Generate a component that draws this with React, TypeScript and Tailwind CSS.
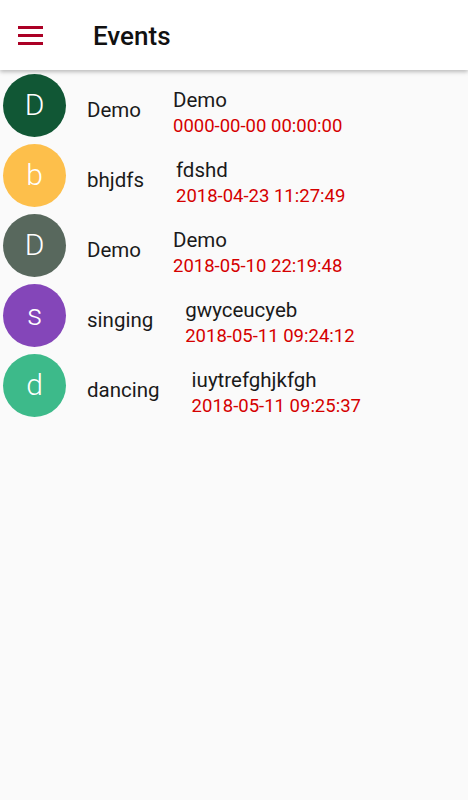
import React from "react";

type EventItem = {
  letter: string;
  name: string;
  title: string;
  date: string;
  color: string;
};

const events: EventItem[] = [
  { letter: "D", name: "Demo", title: "Demo", date: "0000-00-00 00:00:00", color: "bg-[#115735]" },
  { letter: "b", name: "bhjdfs", title: "fdshd", date: "2018-04-23 11:27:49", color: "bg-[#fdbf4b]" },
  { letter: "D", name: "Demo", title: "Demo", date: "2018-05-10 22:19:48", color: "bg-[#58685d]" },
  { letter: "s", name: "singing", title: "gwyceucyeb", date: "2018-05-11 09:24:12", color: "bg-[#8446b9]" },
  { letter: "d", name: "dancing", title: "iuytrefghjkfgh", date: "2018-05-11 09:25:37", color: "bg-[#3dba8a]" },
];

function EventRow({ item }: { item: EventItem }) {
  return (
    <div className="flex h-[70px] items-center">
      <div
        className={`ml-[3px] flex h-[63px] w-[63px] shrink-0 items-center justify-center rounded-full ${item.color}`}
      >
        <span className="text-[30px] font-light leading-none text-white">{item.letter}</span>
      </div>
      <span className="ml-[21px] pt-[11px] text-[20.5px] leading-none text-[#1a1a1a]">{item.name}</span>
      <div className="ml-[32px] flex flex-col pt-[16px]">
        <span className="text-[20.5px] leading-[24px] text-[#1a1a1a]">{item.title}</span>
        <span className="mt-[3px] text-[18.5px] leading-[23px] text-[#d50000]">{item.date}</span>
      </div>
    </div>
  );
}

export default function App() {
  return (
    <div
      className="flex min-h-[800px] w-full flex-col bg-[#fafafa]"
      style={{ fontFamily: "Roboto, 'Liberation Sans', sans-serif" }}
    >
      <header className="relative z-10 flex h-[70px] items-center bg-white shadow-[0_2px_4px_rgba(0,0,0,0.25)]">
        <button className="ml-[18px] flex h-[24px] w-[25px] flex-col justify-center gap-[5px]">
          <span className="block h-[3px] w-[25px] bg-[#ab0025]" />
          <span className="block h-[3px] w-[25px] bg-[#ab0025]" />
          <span className="block h-[3px] w-[25px] bg-[#ab0025]" />
        </button>
        <h1 className="ml-[50px] pt-[2px] text-[26px] font-medium text-[#111]">Events</h1>
      </header>
      <main className="flex flex-col">
        {events.map((e, i) => (
          <EventRow key={i} item={e} />
        ))}
      </main>
    </div>
  );
}
